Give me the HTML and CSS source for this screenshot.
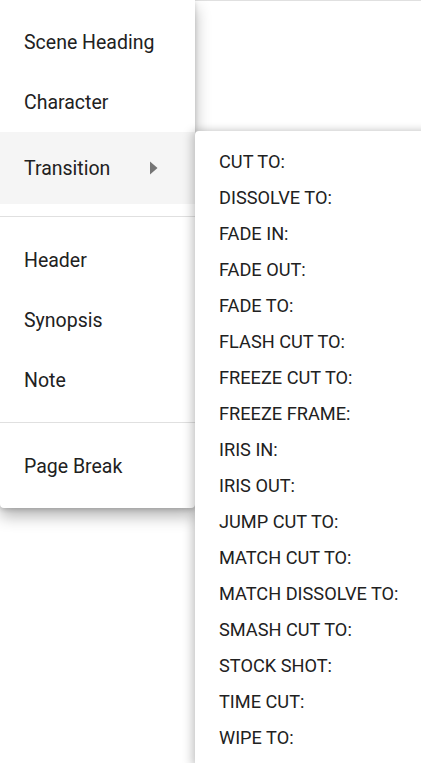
FILE: index.html
```html
<!DOCTYPE html>
<html lang="en">
<head>
    <meta charset="UTF-8">
    <meta name="viewport" content="width=device-width, initial-scale=1.0">
    <title>Insert element</title>
    <link rel="stylesheet" href="styles.css">
</head>
<body>
    <div class="top-line"></div>

    <div class="menu">
        <div class="menu-group">
            <div class="menu-item">Scene Heading</div>
            <div class="menu-item">Character</div>
            <div class="menu-item menu-item-sub active">
                <span>Transition</span>
                <svg class="arrow" width="10" height="14" viewBox="0 0 10 14">
                    <path d="M1 0.5 L8.5 7 L1 13.5 Z" fill="#757575"/>
                </svg>
            </div>
        </div>
        <div class="menu-group">
            <div class="menu-item">Header</div>
            <div class="menu-item">Synopsis</div>
            <div class="menu-item">Note</div>
        </div>
        <div class="menu-group">
            <div class="menu-item">Page Break</div>
        </div>
    </div>

    <div class="submenu">
        <div class="sub-item">CUT TO:</div>
        <div class="sub-item">DISSOLVE TO:</div>
        <div class="sub-item">FADE IN:</div>
        <div class="sub-item">FADE OUT:</div>
        <div class="sub-item">FADE TO:</div>
        <div class="sub-item">FLASH CUT TO:</div>
        <div class="sub-item">FREEZE CUT TO:</div>
        <div class="sub-item">FREEZE FRAME:</div>
        <div class="sub-item">IRIS IN:</div>
        <div class="sub-item">IRIS OUT:</div>
        <div class="sub-item">JUMP CUT TO:</div>
        <div class="sub-item">MATCH CUT TO:</div>
        <div class="sub-item">MATCH DISSOLVE TO:</div>
        <div class="sub-item">SMASH CUT TO:</div>
        <div class="sub-item">STOCK SHOT:</div>
        <div class="sub-item">TIME CUT:</div>
        <div class="sub-item">WIPE TO:</div>
    </div>
</body>
</html>
```

FILE: styles.css
```css
body {
    margin: 0;
    font-family: Roboto, "Liberation Sans", Arial, sans-serif;
    background-color: #fff;
    color: #212121;
    overflow: hidden;
}

.top-line {
    height: 1px;
    margin-left: 193px;
    background-color: #e0e0e0;
}

/* main insert menu */
.menu {
    position: absolute;
    top: 0;
    left: 0;
    width: 195px;
    background-color: #fff;
    border-radius: 0 0 4px 4px;
    box-shadow: 0 8px 16px rgba(0, 0, 0, 0.3), 0 2px 4px rgba(0, 0, 0, 0.14);
}

.menu-group {
    padding: 12px 0;
    border-bottom: 1px solid #e0e0e0;
}

.menu-group:last-child {
    border-bottom: none;
}

.menu-group + .menu-group {
    padding-top: 13px;
}

.menu-item {
    display: flex;
    align-items: center;
    height: 60px;
    padding: 0 24px;
    font-size: 19.5px;
}

.menu-item-sub {
    height: 72px;
    justify-content: space-between;
    padding-right: 36px;
}

.menu-item.active {
    background-color: #f5f5f5;
}

/* transition submenu */
.submenu {
    position: absolute;
    top: 131px;
    left: 195px;
    width: 240px;
    padding: 12px 0;
    background-color: #fff;
    border-radius: 4px;
    box-shadow: -4px 0 10px rgba(0, 0, 0, 0.18), 0 -2px 6px rgba(0, 0, 0, 0.06);
}

.sub-item {
    display: flex;
    align-items: center;
    height: 36px;
    padding: 0 24px;
    font-size: 18.2px;
    white-space: nowrap;
}
```
